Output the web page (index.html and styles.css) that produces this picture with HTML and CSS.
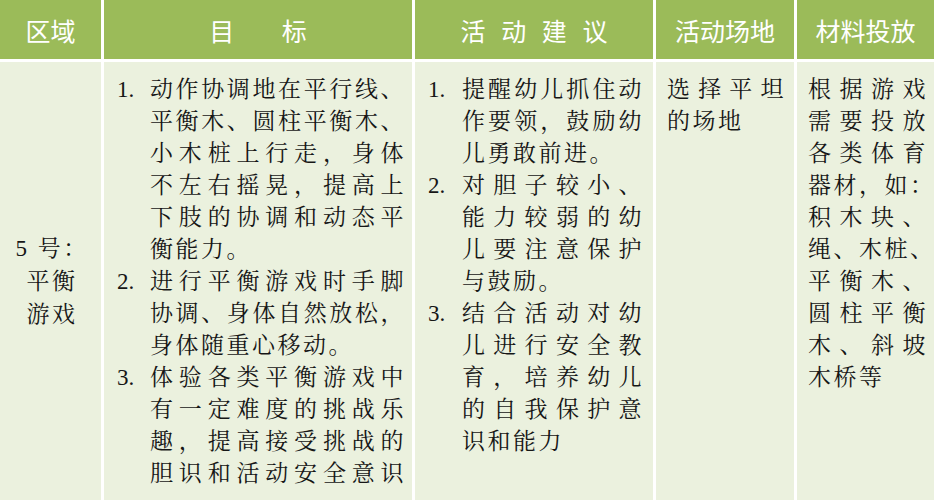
FILE: index.html
```html
<!DOCTYPE html>
<html lang="zh-CN">
<head>
<meta charset="utf-8">
<title>平衡游戏 区域活动</title>
<link rel="stylesheet" href="styles.css">
</head>
<body>
<div class="table">
  <div class="th">区域</div>
  <div class="th"><span class="sp-goal">目 标</span></div>
  <div class="th"><span class="sp-adv">活 动 建 议</span></div>
  <div class="th">活动场地</div>
  <div class="th">材料投放</div>

  <div class="td area">
    <span class="ln-c">5 号：</span>
    <span class="ln-c">平衡</span>
    <span class="ln-c">游戏</span>
  </div>

  <div class="td goals">
    <ol class="list">
      <li class="item"><span class="num">1.</span><span class="lines">
        <span class="ln">动作协调地在平行线、</span>
        <span class="ln">平衡木、圆柱平衡木、</span>
        <span class="ln">小木桩上行走，身体</span>
        <span class="ln">不左右摇晃，提高上</span>
        <span class="ln">下肢的协调和动态平</span>
        <span class="ln end">衡能力。</span>
      </span></li>
      <li class="item"><span class="num">2.</span><span class="lines">
        <span class="ln">进行平衡游戏时手脚</span>
        <span class="ln">协调、身体自然放松，</span>
        <span class="ln end">身体随重心移动。</span>
      </span></li>
      <li class="item"><span class="num">3.</span><span class="lines">
        <span class="ln">体验各类平衡游戏中</span>
        <span class="ln">有一定难度的挑战乐</span>
        <span class="ln">趣，提高接受挑战的</span>
        <span class="ln">胆识和活动安全意识</span>
      </span></li>
    </ol>
  </div>

  <div class="td advice">
    <ol class="list">
      <li class="item"><span class="num">1.</span><span class="lines">
        <span class="ln">提醒幼儿抓住动</span>
        <span class="ln">作要领，鼓励幼</span>
        <span class="ln end">儿勇敢前进。</span>
      </span></li>
      <li class="item"><span class="num">2.</span><span class="lines">
        <span class="ln">对胆子较小、</span>
        <span class="ln">能力较弱的幼</span>
        <span class="ln">儿要注意保护</span>
        <span class="ln end">与鼓励。</span>
      </span></li>
      <li class="item"><span class="num">3.</span><span class="lines">
        <span class="ln">结合活动对幼</span>
        <span class="ln">儿进行安全教</span>
        <span class="ln">育，培养幼儿</span>
        <span class="ln">的自我保护意</span>
        <span class="ln end">识和能力</span>
      </span></li>
    </ol>
  </div>

  <div class="td place">
    <span class="ln">选择平坦</span>
    <span class="ln end">的场地</span>
  </div>

  <div class="td material">
    <span class="ln">根据游戏</span>
    <span class="ln">需要投放</span>
    <span class="ln">各类体育</span>
    <span class="ln">器材，如：</span>
    <span class="ln">积木块、</span>
    <span class="ln">绳、木桩、</span>
    <span class="ln">平衡木、</span>
    <span class="ln">圆柱平衡</span>
    <span class="ln">木、斜坡</span>
    <span class="ln end">木桥等</span>
  </div>
</div>
</body>
</html>
```

FILE: styles.css
```css
html, body {
  margin: 0;
  padding: 0;
  background: #ffffff;
}

body {
  width: 934px;
  height: 500px;
  overflow: hidden;
}

.table {
  display: grid;
  grid-template-columns: 101px 308px 238px 138px 137px;
  grid-template-rows: 59px 438px;
  column-gap: 3px;
  row-gap: 3px;
  background: #ffffff;
}

.th {
  background: #9bbb59;
  color: #ffffff;
  font-family: "Noto Sans CJK SC", "Noto Sans", sans-serif;
  font-size: 25px;
  display: flex;
  align-items: center;
  justify-content: center;
  white-space: pre;
}

.sp-goal {
  letter-spacing: 21px;
  margin-right: -21px;
}

.sp-adv {
  letter-spacing: 5px;
  margin-right: -5px;
}

.td {
  background: #ebf1de;
  color: #161616;
  font-family: "Liberation Serif", "Noto Serif CJK SC", "Noto Sans CJK SC", serif;
  font-size: 23px;
  letter-spacing: 2.5px;
  line-height: 32px;
  box-sizing: border-box;
}

.area {
  display: flex;
  flex-direction: column;
  justify-content: center;
  align-items: center;
  line-height: 33px;
  padding-left: 3px;
}

.ln-c {
  display: block;
  text-align: center;
}

.goals {
  padding: 12px 6px 0 13px;
}

.advice {
  padding: 12px 9px 0 13px;
}

.place {
  padding: 12px 8px 0 11px;
}

.material {
  padding: 12px 6px 0 11px;
}

.list {
  list-style: none;
  margin: 0;
  padding: 0;
}

.item {
  display: flex;
}

.num {
  flex: 0 0 auto;
  letter-spacing: 0;
}

.goals .num {
  width: 33px;
}

.advice .num {
  width: 34px;
}

.lines {
  flex: 1 1 auto;
  display: block;
}

.ln {
  display: block;
  text-align: justify;
  text-align-last: justify;
  text-justify: inter-character;
  white-space: nowrap;
}

.ln.end {
  text-align-last: left;
}
```
